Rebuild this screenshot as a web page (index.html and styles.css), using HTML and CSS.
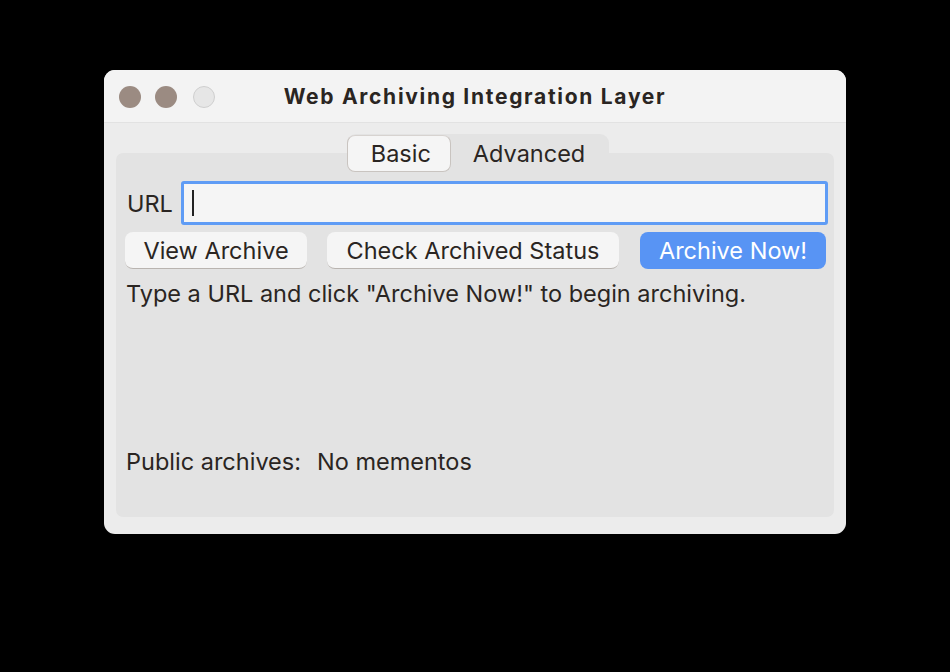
FILE: index.html
```html
<!DOCTYPE html>
<html>
<head>
<meta charset="utf-8">
<link rel="stylesheet" href="styles.css">
</head>
<body>
<div class="window">
  <div class="titlebar">
    <div class="lights">
      <span class="light"></span>
      <span class="light"></span>
      <span class="light off"></span>
    </div>
    <div class="title">Web Archiving Integration Layer</div>
    <div class="spacer"></div>
  </div>
  <div class="body">
    <div class="tabs">
      <div class="tab active">Basic</div>
      <div class="tab">Advanced</div>
    </div>
    <div class="panel">
      <div class="url-row">
        <label class="url-label">URL</label>
        <div class="input"><span class="caret"></span></div>
      </div>
      <div class="btn-row">
        <div class="btn btn-view">View Archive</div>
        <div class="btn btn-check">Check Archived Status</div>
        <div class="btn btn-primary">Archive Now!</div>
      </div>
      <div class="status">Type a URL and click "Archive Now!" to begin archiving.</div>
      <div class="public"><span>Public archives:</span><span class="mementos">No mementos</span></div>
    </div>
  </div>
</div>
</body>
</html>
```

FILE: styles.css
```css
html, body {
  margin: 0;
  padding: 0;
  background: #000;
  width: 950px;
  height: 672px;
  overflow: hidden;
  font-family: Inter, "Noto Sans", sans-serif;
  color: #2a2522;
}
.window {
  margin: 70px 0 0 104px;
  width: 742px;
  height: 464px;
  border-radius: 11px;
  background: #ececec;
  overflow: hidden;
  display: flex;
  flex-direction: column;
}
.titlebar {
  height: 52px;
  background: #f3f3f3;
  border-bottom: 1px solid #e2e2e2;
  display: grid;
  grid-template-columns: 1fr auto 1fr;
  align-items: center;
}
.lights {
  display: flex;
  gap: 14px;
  margin-left: 15px;
  margin-top: 2px;
}
.light {
  width: 22px;
  height: 22px;
  border-radius: 50%;
  background: #9b8b82;
  box-sizing: border-box;
}
.light.off {
  background: #e6e6e6;
  border: 1px solid #cfcfcf;
  margin-left: 2px;
}
.title {
  font-weight: 700;
  font-size: 21px;
  letter-spacing: 1.7px;
  color: #2a2522;
}
.body {
  flex: 1;
  padding: 11px 12px 17px 12px;
  display: flex;
  flex-direction: column;
  align-items: center;
}
.tabs {
  display: flex;
  align-items: center;
  background: #e3e3e3;
  border-radius: 9px 9px 0 0;
  padding: 1px 0 0 0;
  height: 38px;
  box-sizing: border-box;
  margin-bottom: -19px;
  margin-left: 6px;
  position: relative;
  z-index: 1;
}
.tab {
  font-size: 23.5px;
  color: #2a2522;
  height: 37px;
  display: flex;
  align-items: center;
  padding: 0 24px 0 22px;
}
.tab.active {
  background: #f5f5f5;
  border-radius: 8px;
  border: 1px solid #c9c4c0;
  border-top-color: #d7d3d0;
  box-sizing: border-box;
  padding: 0 19px 0 23px;
}
.panel {
  align-self: stretch;
  flex: 1;
  background: #e3e3e3;
  border-radius: 7px;
  padding: 28px 6px 0 10px;
  display: flex;
  flex-direction: column;
}
.url-row {
  display: flex;
  align-items: center;
  gap: 8px;
}
.url-label {
  font-size: 23.5px;
  color: #2a2522;
  margin-left: 1px;
}
.input {
  flex: 1;
  height: 44px;
  box-sizing: border-box;
  border: 3px solid #5f9cf5;
  border-radius: 3px;
  background: #f5f5f5;
  display: flex;
  align-items: center;
  padding-left: 8px;
}
.caret {
  width: 2px;
  height: 26px;
  background: #222;
}
.btn-row {
  display: flex;
  margin-top: 7px;
  gap: 20px;
}
.btn {
  height: 37px;
  box-sizing: border-box;
  border-radius: 8px;
  background: #f5f5f5;
  font-size: 23.5px;
  color: #2a2522;
  display: flex;
  align-items: center;
  justify-content: center;
  border-bottom: 1px solid #b9b4b0;
}
.btn-view { width: 182px; margin-left: -1px; }
.btn-check { width: 292px; }
.btn-primary {
  width: 186px;
  margin-left: 1px;
  background: #5894f4;
  color: #fff;
  border-bottom: none;
}
.status {
  font-size: 23.5px;
  color: #2a2522;
  margin-top: 10px;
}
.public {
  font-size: 23.5px;
  color: #2a2522;
  margin-top: 139px;
  display: flex;
  gap: 16px;
}
```
